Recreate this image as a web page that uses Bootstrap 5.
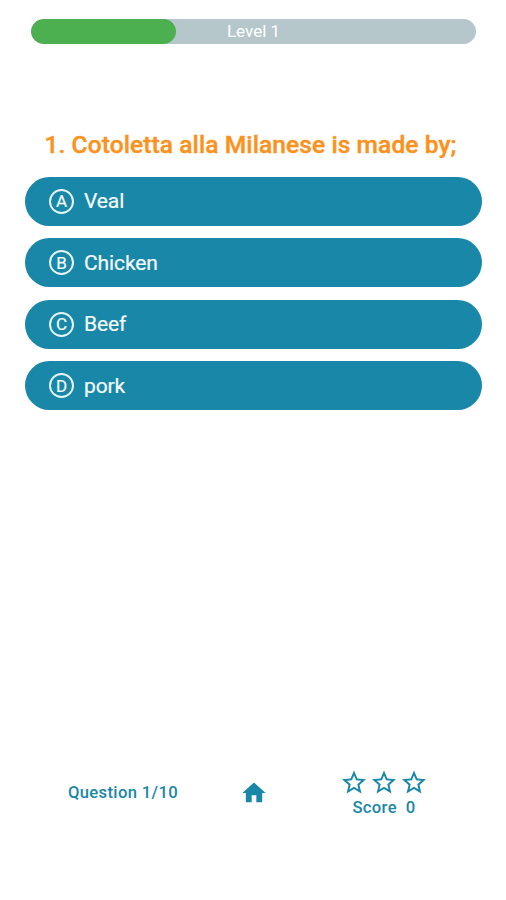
<!DOCTYPE html>
<html lang="en">
<head>
<meta charset="utf-8">
<meta name="viewport" content="width=device-width, initial-scale=1">
<title>Food Quiz</title>
<link href="https://cdn.jsdelivr.net/npm/bootstrap@5.3.0/dist/css/bootstrap.min.css" rel="stylesheet">
<style>
  :root { --teal: #1987a8; }
  body { font-family: Roboto, "Liberation Sans", sans-serif; background: #fff; }
  .quiz { height: 900px; padding: 19px 24px 82px 25px; }
  .level { height: 24.5px; margin: 0 6px; background: #b6c7cb; --bs-progress-bar-bg: #4caf50; }
  .level-label { font-size: 17px; line-height: 25px; }
  .question { margin: 85px 0 0 19.5px; height: 32px; font-size: 24.6px; line-height: 32px; font-weight: 500; color: #fb9220; -webkit-text-stroke: .4px #fb9220; letter-spacing: .06px; white-space: nowrap; }
  .answers { margin-top: 16px; gap: 12.5px; }
  .answer { --bs-btn-color: #f4fbfd; --bs-btn-bg: var(--teal); --bs-btn-hover-color: #fff; --bs-btn-hover-bg: #14748f; height: 49px; padding: 0 24px; gap: 10px; border: 0; font-size: 21px; line-height: 48px; letter-spacing: -.1px; -webkit-text-stroke: .2px; }
  .letter { width: 25px; height: 25px; padding-top: 1px; border: 2px solid #e6f5f9; font-size: 17px; line-height: 1; }
  .teal { color: var(--teal); }
  .status { height: 50px; font-size: 16.6px; font-weight: 500; }
  .cell-count { width: 171px; padding-left: 43px; letter-spacing: .35px; white-space: nowrap; }
  .cell-home { width: 115px; }
  .cell-score { width: 146px; padding-top: 3px; }
  .stars { gap: 5.6px; height: 25px; }
  .score { line-height: 25px; letter-spacing: .35px; }
</style>
</head>
<body>
<main class="quiz d-flex flex-column">
  <div class="progress level rounded-pill position-relative" role="progressbar" aria-valuenow="1" aria-valuemax="10">
    <div class="progress-bar rounded-pill" style="width:32.6%"></div>
    <span class="level-label position-absolute w-100 text-center text-white">Level 1</span>
  </div>
  <h1 class="question mb-0">1. Cotoletta alla Milanese is made by;</h1>
  <div class="answers d-flex flex-column">
    <button class="btn answer rounded-pill d-flex align-items-center"><span class="letter rounded-circle d-flex align-items-center justify-content-center">A</span>Veal</button>
    <button class="btn answer rounded-pill d-flex align-items-center"><span class="letter rounded-circle d-flex align-items-center justify-content-center">B</span>Chicken</button>
    <button class="btn answer rounded-pill d-flex align-items-center"><span class="letter rounded-circle d-flex align-items-center justify-content-center">C</span>Beef</button>
    <button class="btn answer rounded-pill d-flex align-items-center"><span class="letter rounded-circle d-flex align-items-center justify-content-center">D</span>pork</button>
  </div>
  <footer class="status teal d-flex align-items-center mt-auto">
    <div class="cell-count">Question 1/10</div>
    <a class="cell-home teal d-flex justify-content-center" href="#" aria-label="Home">
      <svg width="28" height="28" viewBox="0 0 24 24" fill="currentColor"><path d="M10 20v-6h4v6h5v-8h3L12 3 2 12h3v8z"/></svg>
    </a>
    <div class="cell-score text-center">
      <div class="stars d-flex justify-content-center align-items-center">
        <svg width="24" height="24" viewBox="2 1.5 20 20" fill="currentColor"><path d="M22 9.24l-7.19-.62L12 2 9.19 8.63 2 9.24l5.46 4.73L5.82 21 12 17.27 18.18 21l-1.63-7.03L22 9.24zM12 15.4l-3.76 2.27 1-4.28-3.32-2.88 4.38-.38L12 6.1l1.71 4.04 4.38.38-3.32 2.88 1 4.28L12 15.4z"/></svg>
        <svg width="24" height="24" viewBox="2 1.5 20 20" fill="currentColor"><path d="M22 9.24l-7.19-.62L12 2 9.19 8.63 2 9.24l5.46 4.73L5.82 21 12 17.27 18.18 21l-1.63-7.03L22 9.24zM12 15.4l-3.76 2.27 1-4.28-3.32-2.88 4.38-.38L12 6.1l1.71 4.04 4.38.38-3.32 2.88 1 4.28L12 15.4z"/></svg>
        <svg width="24" height="24" viewBox="2 1.5 20 20" fill="currentColor"><path d="M22 9.24l-7.19-.62L12 2 9.19 8.63 2 9.24l5.46 4.73L5.82 21 12 17.27 18.18 21l-1.63-7.03L22 9.24zM12 15.4l-3.76 2.27 1-4.28-3.32-2.88 4.38-.38L12 6.1l1.71 4.04 4.38.38-3.32 2.88 1 4.28L12 15.4z"/></svg>
      </div>
      <div class="score">Score&nbsp; 0</div>
    </div>
  </footer>
</main>
<script src="https://cdn.jsdelivr.net/npm/bootstrap@5.3.0/dist/js/bootstrap.bundle.min.js"></script>
</body>
</html>
